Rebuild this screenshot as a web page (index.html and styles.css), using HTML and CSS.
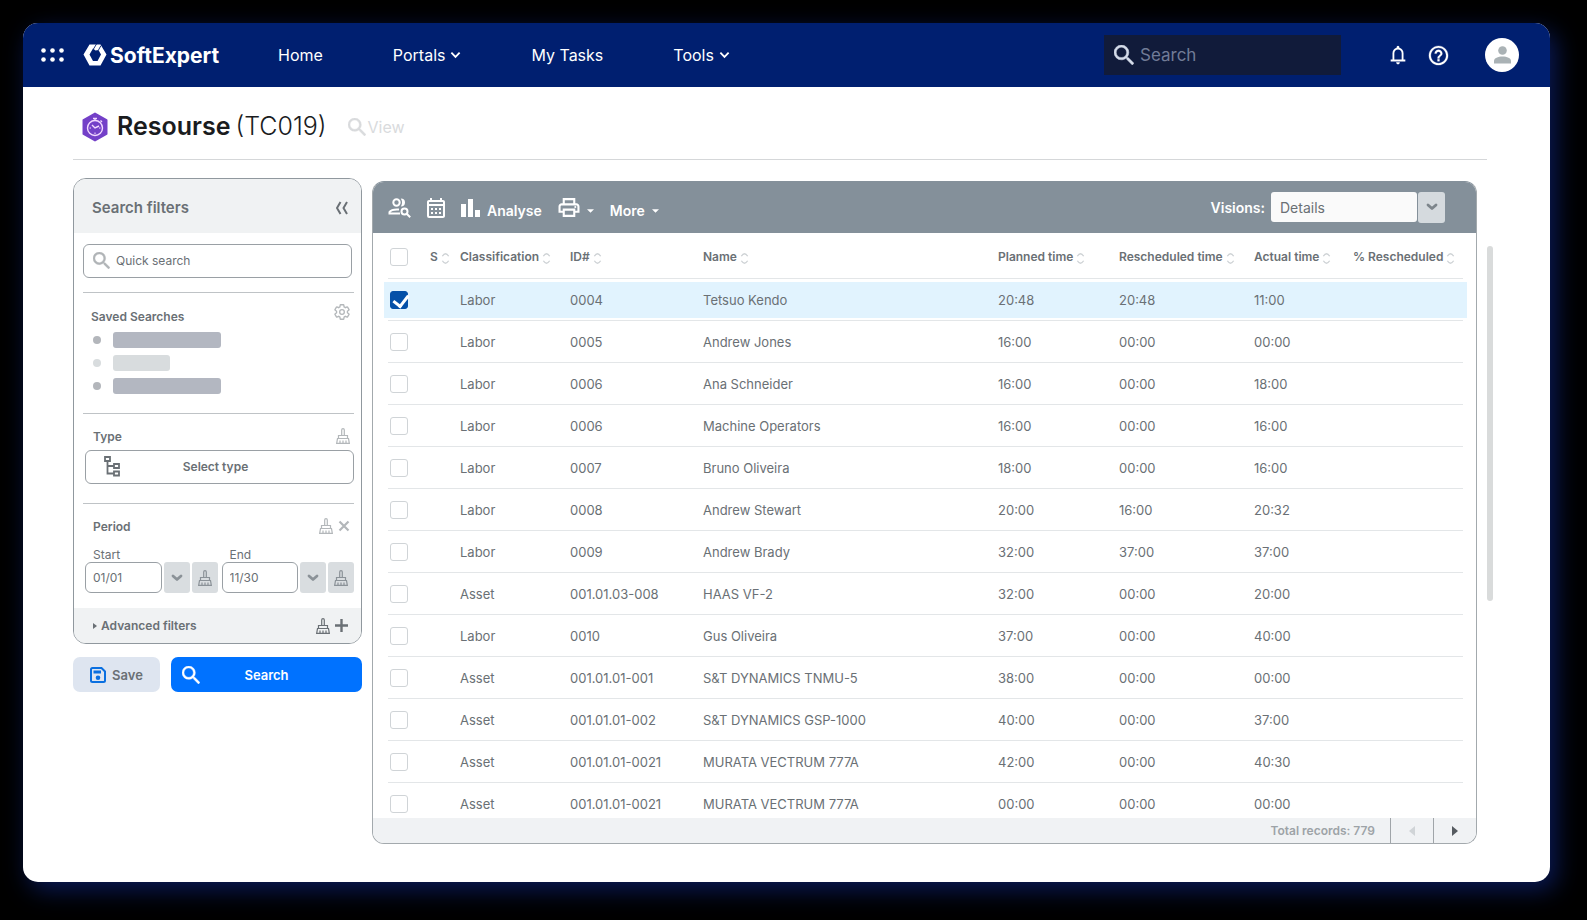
FILE: index.html
```html
<!DOCTYPE html>
<html lang="en">

<head>
    <meta charset="UTF-8">
    <meta name="viewport" content="width=device-width, initial-scale=1.0">
    <title>Resourse (TC019)</title>
    <link rel="stylesheet" href="styles.css">
</head>

<body>
<!-- icons -->
<svg class="sprite" aria-hidden="true">
    <symbol id="i-search" viewBox="3 3 17.5 17.5">
        <path d="M15.5 14h-.79l-.28-.27A6.471 6.471 0 0 0 16 9.5 6.5 6.5 0 1 0 9.5 16c1.61 0 3.09-.59 4.23-1.57l.27.28v.79l5 4.99L20.49 19l-4.99-5zm-6 0C7.01 14 5 11.99 5 9.5S7.01 5 9.5 5 14 7.01 14 9.5 11.99 14 9.5 14z" stroke="currentColor" stroke-width=".4"/>
    </symbol>
    <symbol id="i-down" viewBox="0 0 12 8">
        <path d="M1.5 1.5 6 6l4.500-4.500" fill="none" stroke="currentColor" stroke-width="2"/>
    </symbol>
    <symbol id="i-down-bold" viewBox="0 0 12 8">
        <path d="M2 2l4 3.500L10 2" fill="none" stroke="currentColor" stroke-width="2.800" stroke-linecap="round" stroke-linejoin="round"/>
    </symbol>
    <symbol id="i-caret" viewBox="0 0 8 4">
        <path d="M0 0h8L4 4z"/>
    </symbol>
    <symbol id="i-sort" viewBox="0 0 10 14">
        <path d="M1.500 4.500Q5-1 8.500 4.500M1.500 9.500Q5 15 8.500 9.500" fill="none" stroke="currentColor" stroke-width="1.500"/>
    </symbol>
    <symbol id="i-broom" viewBox="0 0 14 16">
        <path d="M5.700 7V2q0-1.400 1.300-1.400T8.300 2v5M2.500 10.500V7.500h9v3M1.500 10.500h11l.8 4.800H.7zM4 15v-2.500M7 15v-2.500M10 15v-2.500" fill="none" stroke="currentColor" stroke-width="1.200"/>
    </symbol>
</svg>

<div class="window">
    <header class="navbar">
        <button class="apps" aria-label="Apps">
            <svg viewBox="0 0 23 14" width="23" height="14">
                <circle cx="2.500" cy="2.500" r="2.300"/><circle cx="11.500" cy="2.500" r="2.300"/><circle cx="20.500" cy="2.500" r="2.300"/>
                <circle cx="2.500" cy="11.500" r="2.300"/><circle cx="11.500" cy="11.500" r="2.300"/><circle cx="20.500" cy="11.500" r="2.300"/>
            </svg>
        </button>
        <a class="brand" href="#">
            <svg viewBox="0 0 24 22" width="24" height="22">
                <path fill-rule="evenodd" d="M6.500 0.500h11L23.500 10.500 17.500 21.500h-11L0.500 10.500zM10 4.500 6.500 10.500l3.500 6.500h4.500l3.500-6.500-2.500-4.500-3 .5z"/>
                <path d="M13.500 0 10.500 5M15.500 6l2.500-4.500" stroke="#001f70" stroke-width=".9" fill="none"/>
            </svg>
            <span>SoftExpert</span>
        </a>
        <nav class="menu">
            <a href="#">Home</a>
            <a href="#">Portals <svg width="11" height="8"><use href="#i-down"/></svg></a>
            <a href="#">My Tasks</a>
            <a href="#">Tools <svg width="11" height="8"><use href="#i-down"/></svg></a>
        </nav>
        <label class="nav-search">
            <svg width="20" height="20"><use href="#i-search"/></svg>
            <input type="text" placeholder="Search" aria-label="Search">
        </label>
        <div class="nav-icons">
            <button aria-label="Notifications">
                <svg viewBox="0 0 24 24" width="22" height="22"><path d="M4 19v-2h2v-7q0-2.075 1.250-3.687T10.500 4.200v-.7q0-.625.438-1.062T12 2t1.063.438T13.500 3.500v.7q2 .5 3.250 2.113T18 10v7h2v2zm8 3q-.825 0-1.412-.587T10 20h4q0 .825-.587 1.413T12 22m-4-5h8v-7q0-1.650-1.175-2.825T12 6T9.175 7.175T8 10z"/></svg>
            </button>
            <button aria-label="Help">
                <svg viewBox="0 0 24 24" width="23" height="23"><path d="M11 18h2v-2h-2v2zm1-16C6.480 2 2 6.480 2 12s4.480 10 10 10 10-4.480 10-10S17.520 2 12 2zm0 18c-4.410 0-8-3.590-8-8s3.590-8 8-8 8 3.590 8 8-3.590 8-8 8zm0-14c-2.210 0-4 1.790-4 4h2c0-1.100.9-2 2-2s2 .9 2 2c0 2-3 1.750-3 5h2c0-2.250 3-2.500 3-5 0-2.210-1.790-4-4-4z" stroke="currentColor" stroke-width=".3"/></svg>
            </button>
            <button class="avatar" aria-label="Profile">
                <svg viewBox="0 0 17 18" width="17" height="18"><circle cx="8.500" cy="4.500" r="4.300"/><path d="M0 17.500V15c0-3 4-4.500 8.500-4.500S17 12 17 15v2.500z"/></svg>
            </button>
        </div>
    </header>

    <div class="page">
        <div class="title">
            <svg class="title-icon" viewBox="0 0 26 30" width="26" height="30">
                <path d="M13 1.500 24.500 8v14L13 28.500 1.500 22V8z" fill="#7440c8" stroke="#7440c8" stroke-width="2" stroke-linejoin="round"/>
                <g fill="none" stroke="#f3d9ff" stroke-width="1.400">
                    <circle cx="13" cy="16" r="7.500"/>
                    <path d="M11 6.500h4M13 6.500v2M18.500 8.500l1.500 1.500M10 13l3 3 4-2"/>
                    <path d="M13 20.500v1.500M7.500 16H9M17 16h1.500" stroke-width="1"/>
                </g>
            </svg>
            <h1>Resourse <span>(TC019)</span></h1>
            <a class="view" href="#"><svg width="18" height="18"><use href="#i-search"/></svg>View</a>
        </div>

        <div class="content">
            <aside class="side">
                <form class="filters" id="filters">
                    <div class="filters-head">
                        <h2>Search filters</h2>
                        <button type="button" aria-label="Collapse">
                            <svg viewBox="0 0 14 14" width="14" height="14"><path d="M5.500 1 2 7l3.500 6M12 1 8.500 7l3.500 6" fill="none" stroke="currentColor" stroke-width="2" stroke-linejoin="round"/></svg>
                        </button>
                    </div>

                    <div class="section quick">
                        <label>
                            <svg width="17" height="17"><use href="#i-search"/></svg>
                            <input type="text" placeholder="Quick search" aria-label="Quick search">
                        </label>
                    </div>

                    <div class="section saved">
                        <div class="section-head">
                            <h3>Saved Searches</h3>
                            <button type="button" aria-label="Settings">
                                <svg viewBox="1 1 22 22" width="16" height="16"><path d="M19.430 12.980c.04-.32.070-.640.070-.980 0-.340-.030-.660-.070-.980l2.110-1.650c.190-.150.240-.420.120-.640l-2-3.460c-.090-.160-.260-.250-.440-.250-.060 0-.120.010-.170.030l-2.490 1c-.520-.4-1.080-.730-1.690-.980l-.380-2.650C14.460 2.180 14.250 2 14 2h-4c-.250 0-.460.180-.490.420l-.380 2.650c-.610.250-1.170.590-1.690.980l-2.490-1c-.060-.020-.120-.030-.180-.030-.170 0-.340.090-.430.250l-2 3.460c-.130.220-.070.490.120.640l2.110 1.650c-.040.320-.070.650-.070.980 0 .330.030.660.070.980l-2.110 1.650c-.190.150-.240.420-.120.640l2 3.460c.090.160.260.250.440.250.060 0 .120-.010.170-.030l2.490-1c.520.4 1.080.730 1.690.980l.380 2.650c.030.240.240.420.490.420h4c.250 0 .460-.180.490-.420l.380-2.650c.610-.250 1.170-.590 1.690-.980l2.490 1c.060.020.120.030.180.030.170 0 .340-.090.430-.250l2-3.460c.120-.220.070-.490-.120-.640l-2.110-1.650z" fill="none" stroke="currentColor" stroke-width="1.800"/><circle cx="12" cy="12" r="3.200" fill="none" stroke="currentColor" stroke-width="1.800"/></svg>
                            </button>
                        </div>
                        <ul>
                            <li></li>
                            <li class="light"></li>
                            <li></li>
                        </ul>
                    </div>

                    <div class="section type">
                        <div class="section-head">
                            <h3>Type</h3>
                            <button type="button" aria-label="Clear type"><svg width="14" height="16"><use href="#i-broom"/></svg></button>
                        </div>
                        <button type="button" class="select-type">
                            <svg viewBox="0 0 16 21" width="16" height="21"><path d="M1 1h5v4H1zM10 8h5v4h-5zM10 15.500h5v4h-5zM3.500 5v12.500H10M3.500 10H10" fill="none" stroke="currentColor" stroke-width="1.800"/></svg>
                            <span>Select type</span>
                        </button>
                    </div>

                    <div class="section period">
                        <div class="section-head">
                            <h3>Period</h3>
                            <button type="button" aria-label="Clear period"><svg width="14" height="16"><use href="#i-broom"/></svg></button>
                            <button type="button" aria-label="Remove period"><svg viewBox="0 0 12 12" width="12" height="12"><path d="M1.500 1.500l9 9M10.500 1.500l-9 9" stroke="currentColor" stroke-width="2.200"/></svg></button>
                        </div>
                        <div class="dates">
                            <div class="date">
                                <label for="start">Start</label>
                                <div class="date-row">
                                    <input type="text" id="start" value="01/01">
                                    <button type="button" aria-label="Choose start"><svg width="12" height="8"><use href="#i-down-bold"/></svg></button>
                                    <button type="button" aria-label="Clear start"><svg width="14" height="16"><use href="#i-broom"/></svg></button>
                                </div>
                            </div>
                            <div class="date">
                                <label for="end">End</label>
                                <div class="date-row">
                                    <input type="text" id="end" value="11/30">
                                    <button type="button" aria-label="Choose end"><svg width="12" height="8"><use href="#i-down-bold"/></svg></button>
                                    <button type="button" aria-label="Clear end"><svg width="14" height="16"><use href="#i-broom"/></svg></button>
                                </div>
                            </div>
                        </div>
                    </div>

                    <div class="advanced">
                        <button type="button" class="advanced-toggle">
                            <svg viewBox="0 0 4 6" width="4" height="6"><path d="M0 0l4 3-4 3z"/></svg>Advanced filters
                        </button>
                        <button type="button" aria-label="Clear advanced filters"><svg width="14" height="16"><use href="#i-broom"/></svg></button>
                        <button type="button" aria-label="Add filter"><svg viewBox="0 0 12 12" width="13" height="13"><path d="M6 0v12M0 6h12" stroke="currentColor" stroke-width="2.200"/></svg></button>
                    </div>
                </form>

                <div class="actions">
                    <button type="button" class="save">
                        <svg viewBox="0 0 16 16" width="16" height="16"><path d="M2.500 1h9L15 4.500v9q0 1.500-1.500 1.500h-11Q1 15 1 13.500v-11Q1 1 2.500 1z" fill="none" stroke="currentColor" stroke-width="2"/><path d="M3.500 3.500h7.500v3h-7.500z"/><circle cx="8" cy="10.700" r="2.300"/></svg>
                        Save
                    </button>
                    <button type="submit" form="filters" class="search">
                        <svg width="18" height="18"><use href="#i-search"/></svg>
                        <span>Search</span>
                    </button>
                </div>
            </aside>

            <section class="panel">
                <div class="toolbar">
                    <button aria-label="Search people">
                        <svg viewBox="0 0 23 20" width="23" height="20"><g fill="none" stroke="currentColor" stroke-width="2"><circle cx="8.500" cy="4.500" r="3.200"/><path d="M12 15.500H1.500V14q2-3 9.500-2.500"/><circle cx="16.500" cy="13.500" r="3"/><path d="M18.700 15.700l3.500 3.500"/></g><path d="M12.800.5Q17 .7 17 4.500t-4.200 4q2.400-4 0-8z"/></svg>
                    </button>
                    <button aria-label="Calendar">
                        <svg viewBox="3 2 18 20" width="18" height="20"><path d="M19 4h-1V2h-2v2H8V2H6v2H5c-1.110 0-1.990.9-1.990 2L3 20a2 2 0 0 0 2 2h14c1.100 0 2-.9 2-2V6c0-1.100-.9-2-2-2zm0 16H5V10h14v10zm0-12H5V6h14v2zM9 14H7v-2h2v2zm4 0h-2v-2h2v2zm4 0h-2v-2h2v2zm-8 4H7v-2h2v2zm4 0h-2v-2h2v2zm4 0h-2v-2h2v2z"/></svg>
                    </button>
                    <button>
                        <svg viewBox="0 0 19 18" width="19" height="18"><path d="M0 5h5v13H0zM7 0h5v18H7zM14 11h5v7h-5z"/></svg>
                        <span>Analyse</span>
                    </button>
                    <button aria-label="Print">
                        <svg viewBox="2 2 20 20" width="22" height="21"><path d="M19 8h-1V3H6v5H5c-1.660 0-3 1.340-3 3v6h4v4h12v-4h4v-6c0-1.660-1.340-3-3-3zM8 5h8v3H8V5zm8 12v2H8v-4h8v2zm2-2v-2H6v2H4v-4c0-.550.450-1 1-1h14c.550 0 1 .450 1 1v4h-2z"/><circle cx="18" cy="11.500" r="1"/></svg>
                        <svg class="caret" width="7" height="4"><use href="#i-caret"/></svg>
                    </button>
                    <button>
                        <span>More</span>
                        <svg class="caret" width="7" height="4"><use href="#i-caret"/></svg>
                    </button>
                    <div class="visions">
                        <label for="visions">Visions:</label>
                        <select id="visions">
                            <option>Details</option>
                        </select>
                        <button aria-label="Open visions"><svg width="12" height="8"><use href="#i-down-bold"/></svg></button>
                    </div>
                </div>

                <div class="table-wrap">
                    <table>
                        <colgroup>
                            <col class="c-check">
                            <col class="c-s">
                            <col class="c-class">
                            <col class="c-id">
                            <col>
                            <col class="c-planned">
                            <col class="c-resch">
                            <col class="c-actual">
                            <col class="c-percent">
                        </colgroup>
                        <thead>
                        <tr>
                            <th><input type="checkbox" id="all" aria-label="Select all"></th>
                            <th>S<svg><use href="#i-sort"/></svg></th>
                            <th>Classification<svg><use href="#i-sort"/></svg></th>
                            <th>ID#<svg><use href="#i-sort"/></svg></th>
                            <th>Name<svg><use href="#i-sort"/></svg></th>
                            <th>Planned time<svg><use href="#i-sort"/></svg></th>
                            <th>Rescheduled time<svg><use href="#i-sort"/></svg></th>
                            <th>Actual time<svg><use href="#i-sort"/></svg></th>
                            <th>% Rescheduled<svg><use href="#i-sort"/></svg></th>
                        </tr>
                        </thead>
                        <tbody>
                        <tr class="selected">
                            <td><input type="checkbox" aria-label="Select 0004" checked></td>
                            <td></td><td>Labor</td><td>0004</td><td>Tetsuo Kendo</td>
                            <td>20:48</td><td>20:48</td><td>11:00</td><td></td>
                        </tr>
                        <tr>
                            <td><input type="checkbox" aria-label="Select 0005"></td>
                            <td></td><td>Labor</td><td>0005</td><td>Andrew Jones</td>
                            <td>16:00</td><td>00:00</td><td>00:00</td><td></td>
                        </tr>
                        <tr>
                            <td><input type="checkbox" aria-label="Select 0006"></td>
                            <td></td><td>Labor</td><td>0006</td><td>Ana Schneider</td>
                            <td>16:00</td><td>00:00</td><td>18:00</td><td></td>
                        </tr>
                        <tr>
                            <td><input type="checkbox" aria-label="Select 0006"></td>
                            <td></td><td>Labor</td><td>0006</td><td>Machine Operators</td>
                            <td>16:00</td><td>00:00</td><td>16:00</td><td></td>
                        </tr>
                        <tr>
                            <td><input type="checkbox" aria-label="Select 0007"></td>
                            <td></td><td>Labor</td><td>0007</td><td>Bruno Oliveira</td>
                            <td>18:00</td><td>00:00</td><td>16:00</td><td></td>
                        </tr>
                        <tr>
                            <td><input type="checkbox" aria-label="Select 0008"></td>
                            <td></td><td>Labor</td><td>0008</td><td>Andrew Stewart</td>
                            <td>20:00</td><td>16:00</td><td>20:32</td><td></td>
                        </tr>
                        <tr>
                            <td><input type="checkbox" aria-label="Select 0009"></td>
                            <td></td><td>Labor</td><td>0009</td><td>Andrew Brady</td>
                            <td>32:00</td><td>37:00</td><td>37:00</td><td></td>
                        </tr>
                        <tr>
                            <td><input type="checkbox" aria-label="Select 001.01.03-008"></td>
                            <td></td><td>Asset</td><td>001.01.03-008</td><td>HAAS VF-2</td>
                            <td>32:00</td><td>00:00</td><td>20:00</td><td></td>
                        </tr>
                        <tr>
                            <td><input type="checkbox" aria-label="Select 0010"></td>
                            <td></td><td>Labor</td><td>0010</td><td>Gus Oliveira</td>
                            <td>37:00</td><td>00:00</td><td>40:00</td><td></td>
                        </tr>
                        <tr>
                            <td><input type="checkbox" aria-label="Select 001.01.01-001"></td>
                            <td></td><td>Asset</td><td>001.01.01-001</td><td>S&amp;T DYNAMICS TNMU-5</td>
                            <td>38:00</td><td>00:00</td><td>00:00</td><td></td>
                        </tr>
                        <tr>
                            <td><input type="checkbox" aria-label="Select 001.01.01-002"></td>
                            <td></td><td>Asset</td><td>001.01.01-002</td><td>S&amp;T DYNAMICS GSP-1000</td>
                            <td>40:00</td><td>00:00</td><td>37:00</td><td></td>
                        </tr>
                        <tr>
                            <td><input type="checkbox" aria-label="Select 001.01.01-0021"></td>
                            <td></td><td>Asset</td><td>001.01.01-0021</td><td>MURATA VECTRUM 777A</td>
                            <td>42:00</td><td>00:00</td><td>40:30</td><td></td>
                        </tr>
                        <tr>
                            <td><input type="checkbox" aria-label="Select 001.01.01-0021"></td>
                            <td></td><td>Asset</td><td>001.01.01-0021</td><td>MURATA VECTRUM 777A</td>
                            <td>00:00</td><td>00:00</td><td>00:00</td><td></td>
                        </tr>
                        </tbody>
                    </table>
                </div>

                <div class="pager">
                    <span>Total records: 779</span>
                    <button aria-label="Previous page" disabled><svg viewBox="0 0 6 10" width="6" height="10"><path d="M6 0v10L0 5z"/></svg></button>
                    <button aria-label="Next page"><svg viewBox="0 0 6 10" width="6" height="10"><path d="M0 0v10l6-5z"/></svg></button>
                </div>
            </section>

            <div class="scrollbar"></div>
        </div>
    </div>
</div>
</body>

</html>
```

FILE: styles.css
```css
* {
    padding: 0;
    margin: 0;
    box-sizing: border-box;
}

body {
    padding: 23px 37px 38px 23px;
    background-color: #000;
    font: 13px "Inter", sans-serif;
    color: #6a7075;
}

button {
    display: flex;
    align-items: center;
    border: 0;
    background: none;
    color: inherit;
    font: inherit;
    cursor: pointer;
}

input,
select {
    font: inherit;
    color: inherit;
}

a {
    color: inherit;
    text-decoration: none;
}

svg {
    flex: none;
    display: block;
    fill: currentColor;
}

.sprite {
    position: absolute;
    width: 0;
    height: 0;
}

.window {
    display: flex;
    flex-direction: column;
    height: calc(100vh - 61px);
    min-height: 740px;
    border-radius: 15px;
    background-color: #fff;
    box-shadow: 6px 8px 24px #0a1a58;
    overflow: hidden;
}

/* navbar */
.navbar {
    display: flex;
    align-items: center;
    flex: none;
    height: 64px;
    padding: 0 31px 0 18px;
    background-color: #001f70;
    color: #fff;
}

.brand {
    display: flex;
    align-items: center;
    gap: 3px;
    width: 195px;
    margin-left: 19px;
    font-size: 21px;
    font-weight: 700;
}

.menu {
    display: flex;
    gap: 70px;
    font-size: 16px;
}

.menu a {
    display: flex;
    align-items: center;
    gap: 5px;
}

.nav-search {
    display: flex;
    align-items: center;
    gap: 6px;
    width: 237px;
    height: 40px;
    margin-left: auto;
    padding: 0 10px;
    background-color: #111b3a;
    color: #d5dcea;
}

.nav-search input {
    flex: 1;
    min-width: 0;
    border: 0;
    outline: none;
    background: none;
    font-size: 17px;
}

.nav-search input::placeholder {
    color: #717b97;
}

.nav-icons {
    display: flex;
    align-items: center;
    gap: 18px;
    margin-left: 46px;
}

.avatar {
    justify-content: center;
    width: 34px;
    height: 34px;
    margin-left: 17px;
    border-radius: 50%;
    background-color: #fff;
    color: #aab2b5;
}

/* title */
.page {
    display: flex;
    flex-direction: column;
    flex: 1;
    min-height: 0;
    padding: 0 57px 38px 50px;
}

.title {
    display: flex;
    align-items: center;
    flex: none;
    height: 73px;
    margin-right: 6px;
    padding: 7px 0 0 9px;
    border-bottom: 1px solid #d5d7d9;
}

h1 {
    display: flex;
    gap: 5px;
    margin: 0 21px 2px 9px;
    font-size: 25px;
    font-weight: 600;
    color: #1a1c1e;
}

h1 span {
    font-weight: 300;
}

.view {
    display: flex;
    align-items: center;
    gap: 2px;
    font-size: 16px;
    color: #d9dbdd;
}

.content {
    display: flex;
    flex: 1;
    min-height: 0;
    padding-top: 18px;
}

/* filters */
.side {
    flex: none;
    width: 289px;
    margin-right: 10px;
}

.filters {
    border: 1px solid #90989e;
    border-radius: 13px;
    overflow: hidden;
}

.filters-head {
    display: flex;
    align-items: center;
    justify-content: space-between;
    height: 54px;
    padding: 3px 12px 0 18px;
    background-color: #f0f2f3;
}

h2 {
    font-size: 15px;
    font-weight: 600;
}

h3 {
    flex: 1;
    font-size: 12px;
    font-weight: 600;
}

.section {
    margin: 0 7px 0 9px;
    border-bottom: 1px solid #bfc3c6;
}

.quick {
    padding: 11px 2px 14px 0;
}

.quick label {
    display: flex;
    align-items: center;
    gap: 6px;
    height: 34px;
    padding: 0 9px 2px;
    border: 1px solid #9aa0a5;
    border-radius: 6px;
    color: #b0b4b7;
}

.quick input {
    flex: 1;
    min-width: 0;
    border: 0;
    outline: none;
    background: none;
    font-size: 12px;
}

.quick input::placeholder {
    color: #6a7075;
}

.section-head {
    display: flex;
    align-items: center;
    gap: 5px;
    height: 20px;
    margin-bottom: 4px;
    padding: 0 4px 0 8px;
}

.section-head button {
    color: #b3b7ba;
}

.saved {
    padding: 11px 0 19px;
}

.saved .section-head {
    height: 24px;
}

.saved .section-head button {
    align-self: flex-start;
}

.saved ul {
    display: grid;
    gap: 7px;
    list-style: none;
}

.saved li {
    display: flex;
    align-items: center;
    gap: 12px;
    height: 16px;
    padding-left: 10px;
}

.saved li::before {
    content: "";
    width: 8px;
    height: 8px;
    border-radius: 50%;
    background-color: #b3b6bb;
}

.saved li::after {
    content: "";
    width: 108px;
    height: 16px;
    border-radius: 3px;
    background-color: #b3b7c1;
}

.saved .light::before,
.saved .light::after {
    background-color: #d8dcde;
}

.saved .light::after {
    width: 57px;
}

.type {
    padding: 12px 0 19px 2px;
}

.select-type {
    width: 100%;
    height: 34px;
    padding: 0 18px 2px;
    border: 1px solid #9aa0a5;
    border-radius: 6px;
    font-size: 12px;
    font-weight: 600;
}

.select-type span {
    flex: 1;
    padding-right: 24px;
}

.period {
    padding: 12px 0 15px 2px;
    border-bottom: 0;
}

.dates {
    display: flex;
    gap: 4px;
    padding-top: 8px;
}

.date {
    flex: 1;
    min-width: 0;
    font-size: 12px;
}

.date label {
    display: block;
    padding-left: 8px;
    line-height: 14px;
}

.date-row {
    display: flex;
    gap: 2px;
}

.date-row input {
    flex: 1;
    min-width: 0;
    height: 31px;
    padding-left: 7px;
    border: 1px solid #9aa0a5;
    border-radius: 6px;
    background: #fff;
}

.date-row button {
    justify-content: center;
    width: 26px;
    border-radius: 3px;
    background-color: #d9dde0;
    color: #8b9298;
}

.advanced {
    display: flex;
    align-items: center;
    gap: 5px;
    height: 35px;
    padding: 0 13px 0 19px;
    background-color: #f0f2f3;
}

.advanced-toggle {
    flex: 1;
    gap: 4px;
    font-size: 12px;
    font-weight: 600;
}

.actions {
    display: flex;
    gap: 11px;
    margin-top: 13px;
}

.actions button {
    height: 35px;
    border-radius: 7px;
    font-weight: 600;
}

.save {
    justify-content: center;
    gap: 6px;
    width: 87px;
    background-color: #dee5f0;
}

.save svg {
    color: #0a6fe0;
}

.search {
    flex: 1;
    padding: 0 11px;
    background-color: #0072ff;
    color: #fff;
}

.search span {
    flex: 1;
    padding-right: 18px;
}

/* table panel */
.panel {
    display: flex;
    flex-direction: column;
    flex: 1;
    min-width: 0;
    margin-top: 3px;
    border: 1px solid #a3a9ad;
    border-top-color: #84909a;
    border-radius: 12px;
    overflow: hidden;
}

.toolbar {
    display: flex;
    align-items: center;
    gap: 16px;
    flex: none;
    height: 51px;
    padding: 0 31px 0 15px;
    background-color: #84909a;
    color: #fff;
    font-size: 14px;
    font-weight: 600;
}

.toolbar > button {
    gap: 7px;
}

.toolbar > button > span {
    padding-top: 6px;
}

.toolbar .caret {
    margin-top: 6px;
}

.visions {
    display: flex;
    align-items: center;
    margin-left: auto;
    padding-bottom: 1px;
}

.visions select {
    width: 146px;
    height: 30px;
    margin-left: 6px;
    padding-left: 9px;
    border: 0;
    border-radius: 3px;
    appearance: none;
    background-color: #fafafa;
    color: #6a7075;
    font-weight: 400;
}

.visions button {
    justify-content: center;
    width: 27px;
    height: 31px;
    margin-left: 1px;
    border-radius: 3px;
    background-color: #d5dade;
    color: #7d858b;
}

.table-wrap {
    flex: 1;
    min-height: 0;
    padding: 0 9px 0 11px;
    overflow: auto;
    scrollbar-width: none;
}

table {
    width: 100%;
    min-width: 960px;
    table-layout: fixed;
    border-collapse: collapse;
}

.c-check {
    width: 46px;
}

.c-s {
    width: 30px;
}

.c-class {
    width: 110px;
}

.c-id {
    width: 133px;
}

.c-planned {
    width: 121px;
}

.c-resch {
    width: 135px;
}

.c-actual {
    width: 99px;
}

.c-percent {
    width: 114px;
}

tr {
    background: linear-gradient(#e3e6e8, #e3e6e8) bottom / calc(100% - 8px) 1px no-repeat;
}

.selected {
    background: linear-gradient(#e3e6e8, #e3e6e8) bottom / calc(100% - 8px) 1px no-repeat,
        linear-gradient(#e1f3fe, #e1f3fe) center / 100% 36px no-repeat;
}

th {
    height: 46px;
    padding-top: 2px;
    font-size: 12px;
    font-weight: 600;
    text-align: left;
    white-space: nowrap;
}

th svg {
    display: inline-block;
    width: 9px;
    height: 13px;
    margin-left: 3px;
    vertical-align: middle;
    color: #cfd3d6;
}

td {
    height: 42px;
    white-space: nowrap;
}

th:first-child,
td:first-child {
    padding-left: 6px;
}

input[type="checkbox"] {
    display: block;
    width: 18px;
    height: 18px;
    border: 1px solid #d0d4d7;
    border-radius: 3px;
    appearance: none;
    background-color: #fff;
}

input[type="checkbox"]:checked {
    border-color: #0450a8;
    background-color: #0450a8;
}

input[type="checkbox"]:checked::before {
    content: "";
    display: block;
    width: 7px;
    height: 12px;
    margin: 0 0 0 5px;
    border: solid #fff;
    border-width: 0 3px 3px 0;
    transform: rotate(38deg);
}

/* footer */
.pager {
    display: flex;
    align-items: stretch;
    justify-content: flex-end;
    flex: none;
    height: 25px;
    background-color: #f0f2f4;
    color: #9da3a7;
    font-size: 12px;
    font-weight: 600;
}

.pager span {
    margin-right: 15px;
    line-height: 25px;
}

.pager button {
    justify-content: center;
    width: 43px;
    border-left: 1px solid #a0a5a9;
    color: #565b60;
}

.pager button:disabled {
    color: #d0d4d7;
}

.scrollbar {
    flex: none;
    width: 6px;
    height: 355px;
    margin: 68px 0 0 10px;
    border-radius: 3px;
    background-color: #d9dbdb;
}
```
